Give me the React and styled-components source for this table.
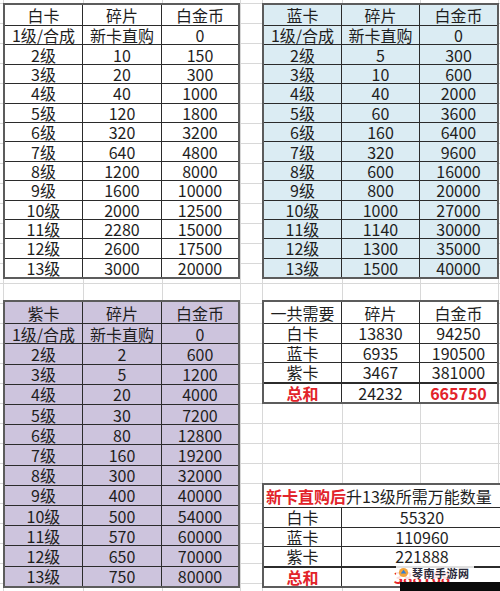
import React from 'react';
import styled, { createGlobalStyle } from 'styled-components';

const GlobalStyle = createGlobalStyle`
  html, body {
    margin: 0;
    padding: 0;
    background: #ffffff;
  }
  body {
    font-family: "Noto Sans CJK SC", "Noto Sans", sans-serif;
  }
`;

const LINE = '#d8d8d8';
const vLine = (x) => `linear-gradient(${LINE}, ${LINE}) ${x}px 0 / 1px 100% no-repeat`;

const Sheet = styled.div`
  position: relative;
  width: 500px;
  height: 591px;
  overflow: hidden;
  box-sizing: border-box;
  padding: 3px 0 0 3px;
  display: flex;
  gap: 22px;
  background: ${[3, 83, 162, 240, 262, 342, 420, 498].map(vLine).join(', ')},
    repeating-linear-gradient(to bottom, ${LINE} 0 1px, transparent 1px 20px) 0 3px / 100% 100%,
    #ffffff;
`;

const Column = styled.div`
  display: flex;
  flex-direction: column;
`;

const Grid = styled.div`
  display: grid;
  grid-template-columns: ${(p) => p.$cols || '77px 78px 76px'};
  grid-template-rows: ${(p) => p.$rows};
  gap: 1px;
  width: max-content;
  background: #2b2b2b;
  border: 2px solid #5c5c5c;
  margin-top: ${(p) => p.$top || 0}px;
`;

const Cell = styled.div`
  display: flex;
  align-items: center;
  justify-content: ${(p) => (p.$left ? 'flex-start' : 'center')};
  padding-left: ${(p) => (p.$left ? '2px' : '0')};
  grid-column: ${(p) => (p.$span ? `span ${p.$span}` : 'auto')};
  background: ${(p) => p.$bg || '#ffffff'};
  border-top: ${(p) => (p.$thick ? '1px solid #2b2b2b' : 'none')};
  font-size: 16px;
  line-height: 1;
  color: ${(p) => (p.$red ? '#e2232a' : '#1e1e1e')};
  font-weight: ${(p) => (p.$red ? 700 : 400)};
  white-space: nowrap;
  overflow: visible;
`;

const Red = styled.span`
  color: #e2232a;
  font-weight: 700;
`;

const Watermark = styled.div`
  position: absolute;
  left: 396px;
  top: 566px;
  display: flex;
  align-items: center;
  gap: 3px;
  height: 13px;
  padding: 0 4px 0 2px;
  background: rgba(255, 255, 255, 0.85);
  font-size: 11px;
  font-weight: 700;
  color: #2a2a3a;
  letter-spacing: 0.5px;
`;

const WatermarkBar = styled.div`
  position: absolute;
  left: 400px;
  top: 582px;
  width: 100px;
  height: 9px;
  background: #0a0a0a;
`;

const levels = Array.from({ length: 12 }, (_, i) => `${i + 2}级`);

const cards = {
  white: {
    name: '白卡',
    bg: '#ffffff',
    shards: [10, 20, 40, 120, 320, 640, 1200, 1600, 2000, 2280, 2600, 3000],
    coins: [150, 300, 1000, 1800, 3200, 4800, 8000, 10000, 12500, 15000, 17500, 20000],
  },
  blue: {
    name: '蓝卡',
    bg: '#dbecf3',
    shards: [5, 10, 40, 60, 160, 320, 600, 800, 1000, 1140, 1300, 1500],
    coins: [300, 600, 2000, 3600, 6400, 9600, 16000, 20000, 27000, 30000, 35000, 40000],
  },
  purple: {
    name: '紫卡',
    bg: '#cdc4dd',
    shards: [2, 5, 20, 30, 80, 160, 300, 400, 500, 570, 650, 750],
    coins: [600, 1200, 4000, 7200, 12800, 19200, 32000, 40000, 54000, 60000, 70000, 80000],
  },
};

function CardTable({ card, rows, cols, top }) {
  const bg = card.bg;
  return (
    <Grid $rows={rows} $cols={cols} $top={top}>
      <Cell $bg={bg}>{card.name}</Cell>
      <Cell $bg={bg}>碎片</Cell>
      <Cell $bg={bg}>白金币</Cell>
      <Cell $bg={bg}>1级/合成</Cell>
      <Cell $bg={bg}>新卡直购</Cell>
      <Cell $bg={bg}>0</Cell>
      {levels.map((lv, i) => (
        <React.Fragment key={lv}>
          <Cell $bg={bg}>{lv}</Cell>
          <Cell $bg={bg}>{card.shards[i]}</Cell>
          <Cell $bg={bg}>{card.coins[i]}</Cell>
        </React.Fragment>
      ))}
    </Grid>
  );
}

const totals = [
  ['白卡', 13830, 94250],
  ['蓝卡', 6935, 190500],
  ['紫卡', 3467, 381000],
];

const direct = [
  ['白卡', 55320],
  ['蓝卡', 110960],
  ['紫卡', 221888],
];

const RIGHT_COLS = '77px 77px 77px';

export default function App() {
  return (
    <>
      <GlobalStyle />
      <Sheet>
        <Column>
          <CardTable card={cards.white} rows="20px repeat(13, 18.4px)" />
          <CardTable card={cards.purple} rows="21px repeat(13, 19.23px)" top={21} />
        </Column>
        <Column>
          <CardTable card={cards.blue} rows="20px repeat(13, 18.4px)" cols={RIGHT_COLS} />

          <Grid $rows="21px 18.5px 18.5px 18.5px 19.5px" $cols={RIGHT_COLS} $top={21}>
            <Cell>一共需要</Cell>
            <Cell>碎片</Cell>
            <Cell>白金币</Cell>
            {totals.map(([name, s, c]) => (
              <React.Fragment key={name}>
                <Cell>{name}</Cell>
                <Cell>{s}</Cell>
                <Cell>{c}</Cell>
              </React.Fragment>
            ))}
            <Cell $thick $red>总和</Cell>
            <Cell $thick>24232</Cell>
            <Cell $thick $red>665750</Cell>
          </Grid>

          <Grid $rows="22px 18.5px 18.5px 18.5px 19.5px" $cols="77px 160px" $top={79}>
            <Cell $span={2} $left>
              <Red>新卡直购后</Red>升13级所需万能数量
            </Cell>
            {direct.map(([name, v]) => (
              <React.Fragment key={name}>
                <Cell>{name}</Cell>
                <Cell>{v}</Cell>
              </React.Fragment>
            ))}
            <Cell $thick $red>总和</Cell>
            <Cell $thick $red>388168</Cell>
          </Grid>
        </Column>

        <Watermark>
          <svg width="11" height="11" viewBox="0 0 12 12">
            <circle cx="6" cy="6" r="5" fill="#f2a33a" />
            <path d="M3 7 L6 3 L9 7 Z" fill="#2f7fd6" />
          </svg>
          琴南手游网
        </Watermark>
        <WatermarkBar />
      </Sheet>
    </>
  );
}
